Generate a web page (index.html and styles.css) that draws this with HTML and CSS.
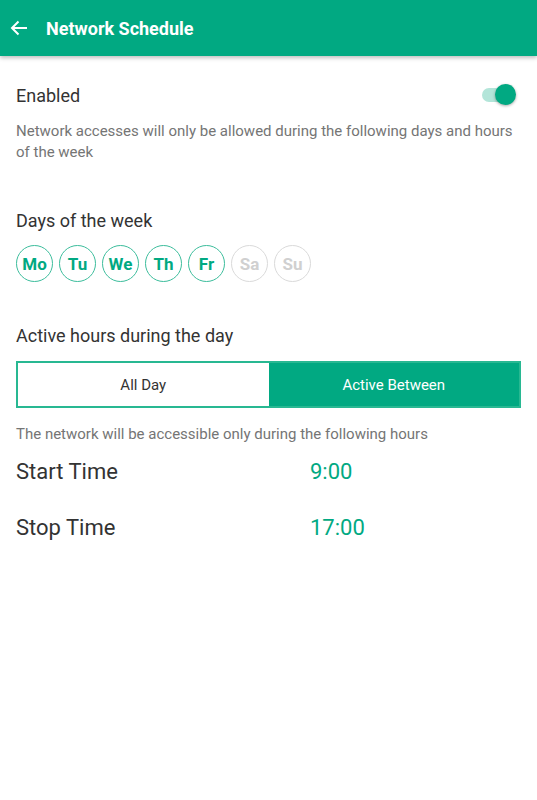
FILE: index.html
```html
<!DOCTYPE html>
<html>
<head>
<meta charset="utf-8">
<link rel="stylesheet" href="styles.css">
</head>
<body>
<header class="appbar">
  <svg class="back" width="18" height="16" viewBox="0 0 18 16"><path d="M17 8H2M8.5 1.5L2 8l6.5 6.5" fill="none" stroke="#fff" stroke-width="2"/></svg>
  <h1 class="title">Network Schedule</h1>
</header>
<main class="content">
  <section class="enabled">
    <div class="row">
      <span class="label">Enabled</span>
      <span class="toggle"><span class="track"></span><span class="knob"></span></span>
    </div>
    <p class="desc">Network accesses will only be allowed during the following days and hours of the week</p>
  </section>
  <section class="days-sec">
    <div class="label">Days of the week</div>
    <div class="days">
      <span class="day on">Mo</span>
      <span class="day on">Tu</span>
      <span class="day on">We</span>
      <span class="day on">Th</span>
      <span class="day on">Fr</span>
      <span class="day off">Sa</span>
      <span class="day off">Su</span>
    </div>
  </section>
  <section class="hours-sec">
    <div class="label">Active hours during the day</div>
    <div class="segmented">
      <div class="seg">All Day</div>
      <div class="seg active">Active Between</div>
    </div>
    <p class="desc2">The network will be accessible only during the following hours</p>
    <div class="times">
      <div class="time-row"><span class="tlabel">Start Time</span><span class="tval">9:00</span></div>
      <div class="time-row"><span class="tlabel">Stop Time</span><span class="tval">17:00</span></div>
    </div>
  </section>
</main>
</body>
</html>
```
FILE: styles.css
```css
* { box-sizing: border-box; }
body {
  margin: 0;
  background: #fff;
  font-family: Roboto, "Noto Sans", "Liberation Sans", sans-serif;
  color: #333;
}
.appbar {
  height: 56px;
  background: #01a982;
  display: flex;
  align-items: center;
  padding-left: 10px;
  box-shadow: 0 2px 4px rgba(0,0,0,0.25);
}
.back { display: block; margin-right: 18px; }
.title {
  margin: 0;
  color: #fff;
  font-size: 18px;
  font-weight: 700;
}
.content { padding: 0 16px; }
.enabled { padding-top: 24px; }
.row {
  display: flex;
  justify-content: space-between;
  align-items: center;
  height: 30px;
}
.label { font-size: 18px; color: #333; }
.toggle { position: relative; width: 36px; height: 24px; display: block; margin-right: 5px; }
.track {
  position: absolute; left: 2px; top: 5px; width: 30px; height: 14px;
  border-radius: 7px; background: #b3e5d9;
}
.knob {
  position: absolute; right: 0; top: 1px; width: 21px; height: 21px; border-radius: 50%;
  background: #01a982; box-shadow: 0 1px 3px rgba(0,0,0,0.35);
}
.desc {
  margin: 11px 0 0;
  font-size: 15px;
  line-height: 21px;
  color: #757575;
}
.days-sec { padding-top: 47px; }
.days { display: flex; gap: 6px; margin-top: 14px; }
.day {
  width: 37px; height: 37px; border-radius: 50%;
  display: flex; align-items: center; justify-content: center;
  font-size: 17px; font-weight: 700;
  border: 1.5px solid;
}
.day.on { color: #01a982; border-color: #3cbd9c; }
.day.off { color: #d0d0d0; border-color: #dadada; }
.hours-sec { padding-top: 43px; }
.segmented {
  display: flex;
  margin-top: 15px;
  height: 47px;
  border: 2px solid #28b892;
}
.seg {
  flex: 1;
  display: flex; align-items: center; justify-content: center;
  font-size: 15px; color: #333;
}
.seg.active { background: #01a982; color: #fff; }
.desc2 {
  margin: 16px 0 0;
  font-size: 15px; line-height: 21px; color: #757575;
}
.times { margin-top: -2px; }
.time-row { display: flex; align-items: center; height: 56px; }
.tlabel { width: 294px; font-size: 22px; color: #333; }
.tval { font-size: 22px; color: #01a982; }
```
